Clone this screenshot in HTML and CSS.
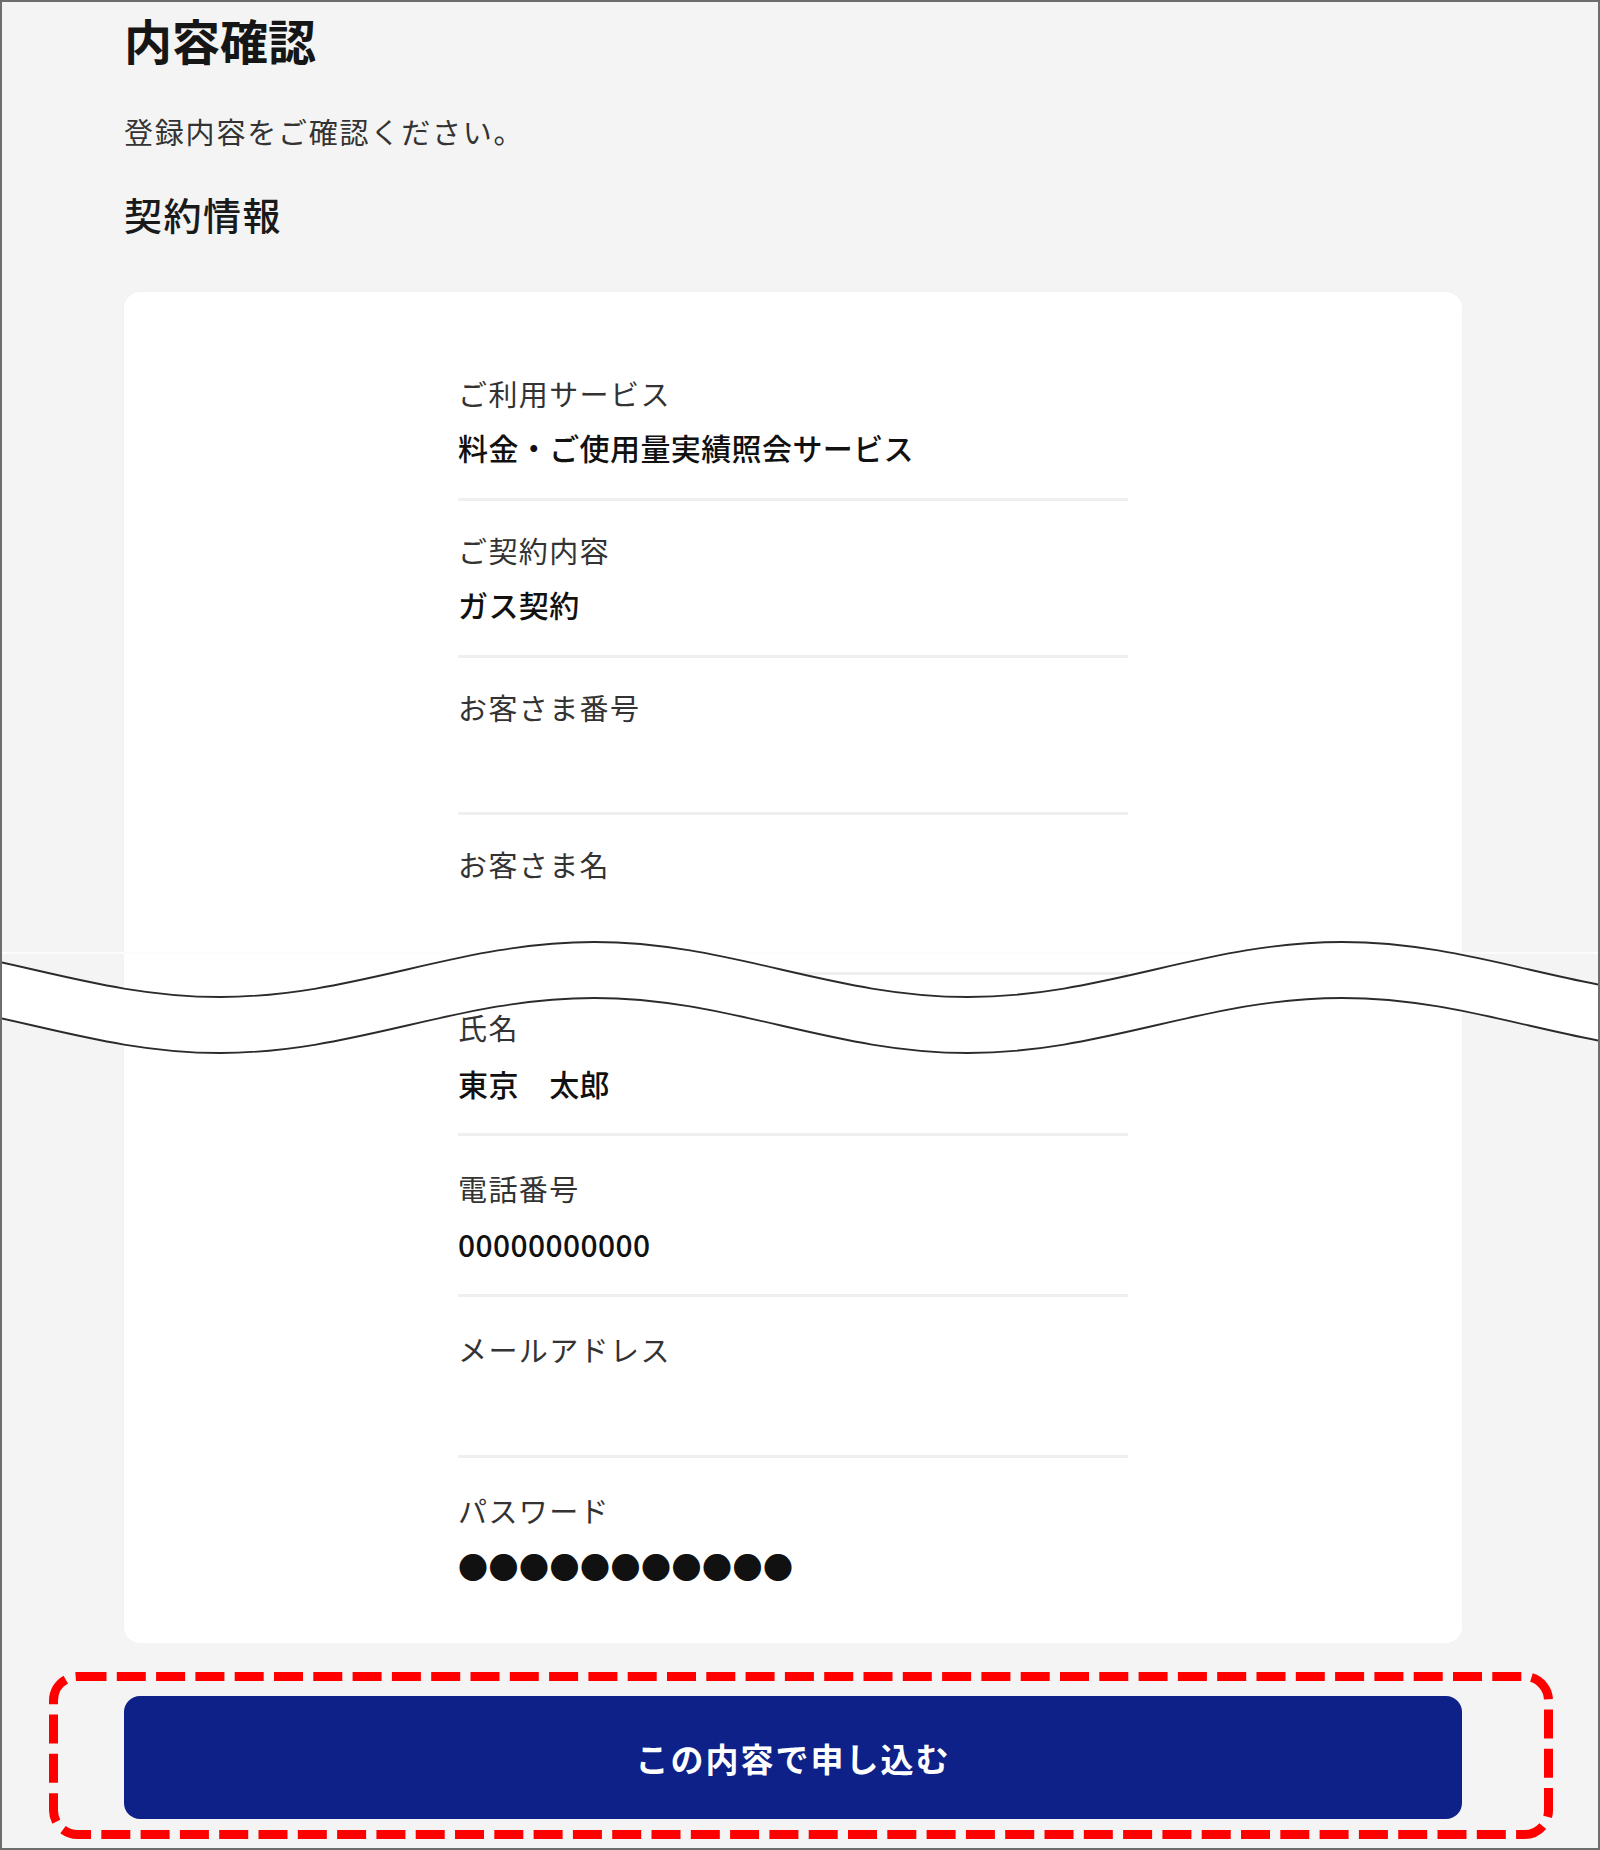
FILE: index.html
```html
<!DOCTYPE html>
<html lang="ja">
<head>
<meta charset="utf-8">
<title>内容確認</title>
<link rel="stylesheet" href="styles.css">
</head>
<body>
<div class="frame">
  <main class="content">
    <h1 class="title">内容確認</h1>
    <p class="lead">登録内容をご確認ください。</p>
    <h2 class="section-title">契約情報</h2>
    <section class="card">
      <dl class="list">
        <div class="row"><dt>ご利用サービス</dt><dd>料金・ご使用量実績照会サービス</dd></div>
        <div class="row"><dt>ご契約内容</dt><dd>ガス契約</dd></div>
        <div class="row"><dt>お客さま番号</dt><dd></dd></div>
        <div class="row row--cut"><dt>お客さま名</dt><dd></dd></div>
        <div class="row row--lg"><dt>氏名</dt><dd>東京　太郎</dd></div>
        <div class="row row--lg"><dt>電話番号</dt><dd>00000000000</dd></div>
        <div class="row row--lg"><dt>メールアドレス</dt><dd></dd></div>
        <div class="row row--lg row--last"><dt>パスワード</dt><dd class="secret">●●●●●●●●●●●</dd></div>
      </dl>
    </section>
    <div class="cta">
      <button class="submit" type="button">この内容で申し込む</button>
      <svg class="annotation" width="1504" height="167" viewBox="0 0 1504 167" aria-hidden="true">
        <rect x="4.5" y="4.5" width="1495" height="158" rx="24" ry="24" fill="none" stroke="#ff0000" stroke-width="9" stroke-dasharray="29 10.3"/>
      </svg>
    </div>
  </main>
  <div class="seam"></div>
  <svg class="wave" width="1596" height="150" viewBox="2 915 1596 150" aria-hidden="true">
    <path fill="#ffffff" d="M-341,969.5 c61,-14.09 119.3,-27.5 187,-27.5 c67.7,0 126,13.41 187,27.5 c61,14.09 119.3,27.5 187,27.5 c67.7,0 126,-13.41 187,-27.5 c61,-14.09 119.3,-27.5 187,-27.5 c67.7,0 126,13.41 187,27.5 c61,14.09 119.3,27.5 187,27.5 c67.7,0 126,-13.41 187,-27.5 c61,-14.09 119.3,-27.5 187,-27.5 c67.7,0 126,13.41 187,27.5 c61,14.09 119.3,27.5 187,27.5 c67.7,0 126,-13.41 187,-27.5 l0,56 c-61,14.09 -119.3,27.5 -187,27.5 c-67.7,0 -126,-13.41 -187,-27.5 c-61,-14.09 -119.3,-27.5 -187,-27.5 c-67.7,0 -126,13.41 -187,27.5 c-61,14.09 -119.3,27.5 -187,27.5 c-67.7,0 -126,-13.41 -187,-27.5 c-61,-14.09 -119.3,-27.5 -187,-27.5 c-67.7,0 -126,13.41 -187,27.5 c-61,14.09 -119.3,27.5 -187,27.5 c-67.7,0 -126,-13.41 -187,-27.5 c-61,-14.09 -119.3,-27.5 -187,-27.5 c-67.7,0 -126,13.41 -187,27.5 Z"/>
    <path fill="none" stroke="#2b2b2b" stroke-width="1.8" d="M-341,969.5 c61,-14.09 119.3,-27.5 187,-27.5 c67.7,0 126,13.41 187,27.5 c61,14.09 119.3,27.5 187,27.5 c67.7,0 126,-13.41 187,-27.5 c61,-14.09 119.3,-27.5 187,-27.5 c67.7,0 126,13.41 187,27.5 c61,14.09 119.3,27.5 187,27.5 c67.7,0 126,-13.41 187,-27.5 c61,-14.09 119.3,-27.5 187,-27.5 c67.7,0 126,13.41 187,27.5 c61,14.09 119.3,27.5 187,27.5 c67.7,0 126,-13.41 187,-27.5"/>
    <path fill="none" stroke="#2b2b2b" stroke-width="1.8" d="M-341,1025.5 c61,-14.09 119.3,-27.5 187,-27.5 c67.7,0 126,13.41 187,27.5 c61,14.09 119.3,27.5 187,27.5 c67.7,0 126,-13.41 187,-27.5 c61,-14.09 119.3,-27.5 187,-27.5 c67.7,0 126,13.41 187,27.5 c61,14.09 119.3,27.5 187,27.5 c67.7,0 126,-13.41 187,-27.5 c61,-14.09 119.3,-27.5 187,-27.5 c67.7,0 126,13.41 187,27.5 c61,14.09 119.3,27.5 187,27.5 c67.7,0 126,-13.41 187,-27.5"/>
  </svg>
</div>
</body>
</html>
```

FILE: styles.css
```css
* {
  box-sizing: border-box;
}

body {
  margin: 0;
  font-family: "Noto Sans CJK JP", "Noto Sans", sans-serif;
  color: #111;
}

.frame {
  position: relative;
  width: 1600px;
  height: 1850px;
  border: 2px solid #6d6d6d;
  background: #f4f4f4;
  overflow: hidden;
}

.content {
  width: 1338px;
  margin-left: 122px;
  padding-top: 5px;
}

.title {
  margin: 0;
  font-size: 48px;
  line-height: 64px;
  font-weight: 700;
  color: #161616;
}

.lead {
  margin: 40px 0 0;
  font-size: 29px;
  line-height: 40px;
  letter-spacing: 1.8px;
  color: #333;
}

.section-title {
  margin: 38px 0 0;
  font-size: 38px;
  line-height: 50px;
  font-weight: 500;
  letter-spacing: 1.5px;
  color: #1a1a1a;
}

.card {
  margin-top: 53px;
  background: #fff;
  border-radius: 16px;
  padding: 52px 0 27px;
  box-shadow: 0 0 2px rgba(0, 0, 0, 0.03);
}

.list {
  width: 670px;
  margin: 0 auto;
}

.row {
  padding: 29px 0 31px;
  border-bottom: 3px solid #efefef;
}

.row--cut {
  padding-bottom: 34px;
}

.row--lg {
  padding: 32px 0 30px;
}

.row--last {
  border-bottom: none;
}

.row dt {
  font-size: 29px;
  line-height: 40px;
  letter-spacing: 1.4px;
  color: #333;
}

.row dd {
  margin: 14px 0 0;
  min-height: 40px;
  font-size: 30px;
  line-height: 40px;
  font-weight: 500;
  letter-spacing: 0.4px;
  color: #111;
}

.row--lg dd {
  margin-top: 16px;
}

.row dd.secret {
  letter-spacing: 0.5px;
}

.cta {
  position: relative;
  margin-top: 53px;
}

.submit {
  display: flex;
  align-items: center;
  justify-content: center;
  width: 100%;
  height: 123px;
  border: 0;
  border-radius: 16px;
  background: #0e2188;
  color: #fff;
  font-family: inherit;
  font-size: 33px;
  font-weight: 700;
  letter-spacing: 2px;
}

.annotation {
  position: absolute;
  left: -75px;
  top: -24px;
  pointer-events: none;
}

.seam {
  position: absolute;
  left: 0;
  right: 0;
  top: 950px;
  height: 2px;
  background: #fcfcfc;
}

.wave {
  position: absolute;
  left: 0;
  top: 913px;
  pointer-events: none;
}
```
